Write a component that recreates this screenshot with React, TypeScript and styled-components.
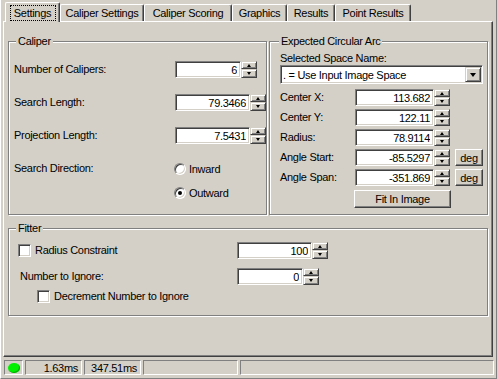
import React from 'react';
import styled, { createGlobalStyle } from 'styled-components';

const face = '#d4d0c8';
const light = '#ffffff';
const shadow = '#808080';
const dark = '#404040';

const raised = `
  border: 1px solid;
  border-color: ${light} ${dark} ${dark} ${light};
  box-shadow: inset -1px -1px ${shadow};
`;

const raisedSoft = `
  border: 1px solid;
  border-color: ${face} ${dark} ${dark} ${face};
  box-shadow: inset 1px 1px ${light}, inset -1px -1px ${shadow};
`;

const sunken = `
  border: 1px solid;
  border-color: ${shadow} ${light} ${light} ${shadow};
  box-shadow: inset 1px 1px ${dark}, inset -1px -1px ${face};
`;

const GlobalStyle = createGlobalStyle`
  html, body {
    margin: 0;
    padding: 0;
    background: ${face};
  }
  body {
    font: 11px "Liberation Sans", Arial, sans-serif;
    letter-spacing: -0.3px;
    color: #000;
  }
  * {
    box-sizing: border-box;
  }
`;

const Window = styled.div`
  width: 497px;
  height: 379px;
  padding-top: 2px;
  border-left: 1px solid ${light};
  border-right: 1px solid ${shadow};
  border-bottom: 1px solid ${shadow};
  display: flex;
  flex-direction: column;
  overflow: hidden;
`;

const TabStrip = styled.div`
  position: relative;
  z-index: 1;
  display: flex;
  align-items: flex-end;
  height: 19px;
  margin-left: 4px;
`;

const Tab = styled.div<{ $w: number; $active?: boolean }>`
  width: ${(p) => p.$w}px;
  height: ${(p) => (p.$active ? 20 : 17)}px;
  margin-bottom: ${(p) => (p.$active ? -1 : 0)}px;
  padding-top: ${(p) => (p.$active ? 1 : 0)}px;
  display: flex;
  align-items: center;
  justify-content: center;
  background: ${face};
  border-top: 1px solid ${light};
  border-left: 1px solid ${light};
  border-right: 1px solid ${dark};
  border-radius: 2px 2px 0 0;
  box-shadow: inset -1px 0 ${shadow};
  white-space: nowrap;
`;

const FocusRing = styled.span`
  display: flex;
  align-items: center;
  justify-content: center;
  width: 46px;
  height: 16px;
  border: 1px dotted #000;
`;

const Panel = styled.div`
  margin-left: 2px;
  width: 490px;
  height: 336px;
  border: 1px solid;
  border-color: ${light} ${dark} ${dark} ${light};
  box-shadow: inset -1px -1px ${shadow};
  padding: 19px 0 0 4px;
`;

const TopRow = styled.div`
  display: flex;
  gap: 2px;
`;

const GroupBox = styled.div<{ $w: number; $h: number; $mt?: number }>`
  position: relative;
  width: ${(p) => p.$w}px;
  height: ${(p) => p.$h}px;
  margin-top: ${(p) => p.$mt ?? 0}px;
  border: 1px solid ${shadow};
  box-shadow: inset 1px 1px ${light}, 1px 1px ${light};
`;

const Legend = styled.span<{ $left: number }>`
  position: absolute;
  top: -7px;
  left: ${(p) => p.$left}px;
  padding: 0 2px;
  line-height: 13px;
  background: ${face};
`;

const CaliperBody = styled.div`
  display: flex;
  flex-direction: column;
  gap: 16px;
  padding: 19px 0 0 5px;
`;

const ArcBody = styled.div`
  display: flex;
  flex-direction: column;
  padding: 10px 0 0 10px;
`;

const FilterBody = styled.div`
  display: flex;
  flex-direction: column;
  padding: 13px 0 0 9px;
`;

const FormRow = styled.div<{ $mt?: number; $h?: number }>`
  display: flex;
  align-items: center;
  height: ${(p) => p.$h ?? 17}px;
  margin-top: ${(p) => p.$mt ?? 0}px;
`;

const FieldLabel = styled.span<{ $w: number; $indent?: number }>`
  display: flex;
  align-items: center;
  width: ${(p) => p.$w}px;
  padding-left: ${(p) => p.$indent ?? 0}px;
  line-height: 13px;
  white-space: nowrap;
`;

const Caption = styled.div`
  line-height: 13px;
`;

const EditBox = styled.input<{ $w: number }>`
  width: ${(p) => p.$w}px;
  height: 17px;
  margin: 0;
  padding: 0 3px 0 2px;
  ${sunken}
  background: ${light};
  font: inherit;
  letter-spacing: inherit;
  color: #000;
  text-align: right;
  outline: none;
`;

const SpinWrap = styled.div`
  display: flex;
`;

const Spin = styled.div`
  display: flex;
  flex-direction: column;
  width: 16px;
  height: 17px;
`;

const SpinHalf = styled.div<{ $h?: number }>`
  display: flex;
  align-items: center;
  justify-content: center;
  height: ${(p) => (p.$h ? `${p.$h}px` : 'auto')};
  flex: ${(p) => (p.$h ? 'none' : 1)};
  ${raisedSoft}
  background: ${face};
`;

const Arrow = styled.span<{ $dir: 'up' | 'down'; $size?: number }>`
  width: 1px;
  height: 0;
  border-left: ${(p) => p.$size ?? 2}px solid transparent;
  border-right: ${(p) => p.$size ?? 2}px solid transparent;
  ${(p) =>
    p.$dir === 'up'
      ? `border-bottom: ${(p.$size ?? 2) + 1}px solid #000;`
      : `border-top: ${(p.$size ?? 2) + 1}px solid #000;`}
`;

const OptionRow = styled.div<{ $indent?: number; $mt?: number }>`
  display: flex;
  align-items: center;
  gap: 3px;
  height: 17px;
  margin-top: ${(p) => p.$mt ?? 0}px;
  padding-left: ${(p) => p.$indent ?? 0}px;
`;

const Radio = styled.span<{ $checked?: boolean }>`
  display: flex;
  align-items: center;
  justify-content: center;
  width: 12px;
  height: 12px;
  border-radius: 50%;
  border: 1px solid;
  border-color: ${shadow} ${light} ${light} ${shadow};
  box-shadow: inset 1px 1px ${dark}, inset -1px -1px ${face};
  background: ${light};
  &::after {
    content: '';
    width: 4px;
    height: 4px;
    border-radius: 50%;
    background: ${(p) => (p.$checked ? '#000' : 'transparent')};
  }
`;

const CheckBox = styled.span`
  flex: none;
  width: 13px;
  height: 13px;
  margin-right: 4px;
  ${sunken}
  background: ${light};
`;

const Combo = styled.div`
  display: flex;
  align-items: center;
  justify-content: space-between;
  width: 203px;
  height: 19px;
  padding: 0 1px 0 2px;
  ${sunken}
  background: ${light};
  white-space: nowrap;
`;

const DropButton = styled.span`
  display: flex;
  align-items: center;
  justify-content: center;
  width: 16px;
  height: 15px;
  ${raisedSoft}
  background: ${face};
`;

const PushButton = styled.button<{ $w: number; $h?: number; $ml?: number; $mt?: number }>`
  display: flex;
  align-items: center;
  justify-content: center;
  width: ${(p) => p.$w}px;
  height: ${(p) => p.$h ?? 17}px;
  margin: ${(p) => p.$mt ?? 0}px 0 0 ${(p) => p.$ml ?? 0}px;
  padding: 0;
  ${raised}
  background: ${face};
  font: inherit;
  letter-spacing: inherit;
  color: #000;
`;

const StatusBar = styled.div`
  display: flex;
  gap: 2px;
  height: 15px;
  margin: 3px 0 0 3px;
`;

const Pane = styled.div<{ $w: number }>`
  display: flex;
  align-items: center;
  justify-content: flex-end;
  width: ${(p) => p.$w}px;
  padding-right: 3px;
  border: 1px solid;
  border-color: ${shadow} ${light} ${light} ${shadow};
  white-space: nowrap;
`;

const LedPane = styled(Pane)`
  justify-content: center;
  padding: 0;
`;

const Led = styled.span`
  width: 12px;
  height: 10px;
  border-radius: 50%;
  background: #00f000;
  box-shadow: inset -1px -1px #00b000;
`;

const SpinEdit = ({ value, width }: { value: string; width: number }) => (
  <SpinWrap>
    <EditBox $w={width} value={value} readOnly />
    <Spin>
      <SpinHalf $h={8}>
        <Arrow $dir="up" />
      </SpinHalf>
      <SpinHalf>
        <Arrow $dir="down" />
      </SpinHalf>
    </Spin>
  </SpinWrap>
);

const tabs = [
  { label: 'Settings', w: 55, active: true },
  { label: 'Caliper Settings', w: 84 },
  { label: 'Caliper Scoring', w: 88 },
  { label: 'Graphics', w: 55 },
  { label: 'Results', w: 48 },
  { label: 'Point Results', w: 76 },
];

const caliperFields = [
  { label: 'Number of Calipers:', value: '6', w: 66 },
  { label: 'Search Length:', value: '79.3466', w: 75 },
  { label: 'Projection Length:', value: '7.5431', w: 75 },
];

const arcFields = [
  { label: 'Center X:', value: '113.682' },
  { label: 'Center Y:', value: '122.11' },
  { label: 'Radius:', value: '78.9114' },
  { label: 'Angle Start:', value: '-85.5297', unit: true },
  { label: 'Angle Span:', value: '-351.869', unit: true },
];

export default function App() {
  return (
    <>
      <GlobalStyle />
      <Window>
        <TabStrip>
          {tabs.map((t) => (
            <Tab key={t.label} $w={t.w} $active={t.active}>
              {t.active ? <FocusRing>{t.label}</FocusRing> : t.label}
            </Tab>
          ))}
        </TabStrip>

        <Panel>
          <TopRow>
            <GroupBox $w={259} $h={174}>
              <Legend $left={7}>Caliper</Legend>
              <CaliperBody>
                {caliperFields.map((f) => (
                  <FormRow key={f.label}>
                    <FieldLabel $w={161}>{f.label}</FieldLabel>
                    <SpinEdit value={f.value} width={f.w} />
                  </FormRow>
                ))}
                <div>
                  <FormRow>
                    <FieldLabel $w={160}>Search Direction:</FieldLabel>
                    <OptionRow>
                      <Radio />
                      Inward
                    </OptionRow>
                  </FormRow>
                  <OptionRow $indent={160} $mt={7}>
                    <Radio $checked />
                    Outward
                  </OptionRow>
                </div>
              </CaliperBody>
            </GroupBox>

            <GroupBox $w={219} $h={174}>
              <Legend $left={9}>Expected Circular Arc</Legend>
              <ArcBody>
                <Caption>Selected Space Name:</Caption>
                <Combo>
                  . = Use Input Image Space
                  <DropButton>
                    <Arrow $dir="down" $size={3} />
                  </DropButton>
                </Combo>
                {arcFields.map((f, i) => (
                  <FormRow key={f.label} $mt={i === 0 ? 5 : 3}>
                    <FieldLabel $w={75}>{f.label}</FieldLabel>
                    <SpinEdit value={f.value} width={79} />
                    {f.unit && (
                      <PushButton $w={28} $ml={5}>
                        deg
                      </PushButton>
                    )}
                  </FormRow>
                ))}
                <PushButton $w={97} $h={18} $ml={74} $mt={4}>
                  Fit In Image
                </PushButton>
              </ArcBody>
            </GroupBox>
          </TopRow>

          <GroupBox $w={480} $h={88} $mt={13}>
            <Legend $left={7}>Fitter</Legend>
            <FilterBody>
              <FormRow>
                <FieldLabel $w={219}>
                  <CheckBox />
                  Radius Constraint
                </FieldLabel>
                <SpinEdit value="100" width={75} />
              </FormRow>
              <FormRow $mt={9}>
                <FieldLabel $w={219} $indent={2}>
                  Number to Ignore:
                </FieldLabel>
                <SpinEdit value="0" width={66} />
              </FormRow>
              <FormRow $mt={4} $h={14}>
                <FieldLabel $w={300} $indent={19}>
                  <CheckBox />
                  Decrement Number to Ignore
                </FieldLabel>
              </FormRow>
            </FilterBody>
          </GroupBox>
        </Panel>

        <StatusBar>
          <LedPane $w={19}>
            <Led />
          </LedPane>
          <Pane $w={57}>1.63ms</Pane>
          <Pane $w={57}>347.51ms</Pane>
          <Pane $w={95} />
          <Pane $w={254} />
        </StatusBar>
      </Window>
    </>
  );
}
